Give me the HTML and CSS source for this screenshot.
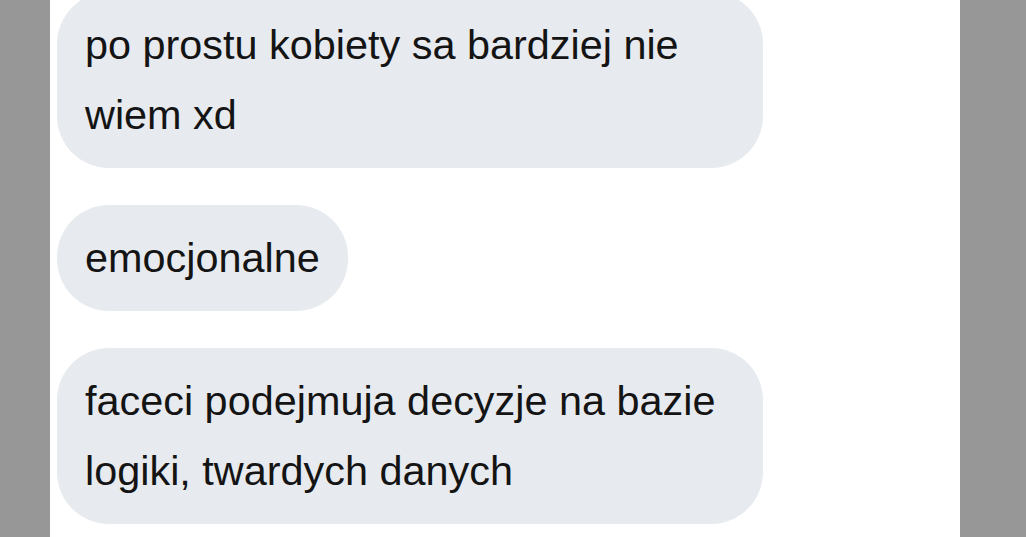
FILE: index.html
```html
<!DOCTYPE html>
<html lang="pl">
<head>
<meta charset="utf-8">
<link rel="stylesheet" href="styles.css">
</head>
<body>
<div class="page">
  <main class="panel">
    <div class="thread">
      <div class="bubble">po prostu kobiety sa bardziej nie wiem xd</div>
      <div class="bubble">emocjonalne</div>
      <div class="bubble">faceci podejmuja decyzje na bazie logiki, twardych danych</div>
    </div>
  </main>
</div>
</body>
</html>
```
FILE: styles.css
```css
html, body {
  margin: 0;
  padding: 0;
  height: 100%;
}
body {
  background: #979797;
  overflow: hidden;
}
.page {
  display: flex;
  height: 537px;
  padding-left: 50px;
}
.panel {
  width: 910px;
  height: 100%;
  background: #ffffff;
  overflow: hidden;
}
.thread {
  display: flex;
  flex-direction: column;
  align-items: flex-start;
  gap: 37px;
  margin-top: -8px;
  padding-left: 7px;
}
.bubble {
  max-width: 650px;
  padding: 18px 28px;
  background: #e7eaef;
  border-radius: 52px;
  color: #141414;
  font-family: "Liberation Sans", Arial, sans-serif;
  font-size: 41.4px;
  line-height: 70px;
}
```
